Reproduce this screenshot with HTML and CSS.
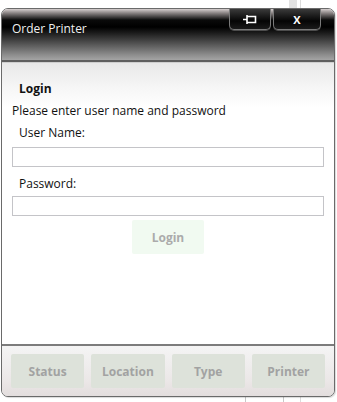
FILE: index.html
```html
<!DOCTYPE html>
<html lang="en">
<head>
    <meta charset="UTF-8">
    <title>Order Printer</title>
    <link rel="stylesheet" href="styles.css">
</head>
<body>
    <div class="behind-strip"></div>
    <div class="behind-line"></div>
    <div class="behind-box"></div>

    <div class="window">
        <div class="titlebar">
            <span class="title">Order Printer</span>
            <div class="caption-buttons">
                <div class="cap-btn pin">
                    <svg width="14" height="10" viewBox="0 0 14 10">
                        <path d="M0 5.5 H4 M4 1 V10 M4 2.5 H12.5 V8.5 H4" fill="none" stroke="#fff" stroke-width="1.6"/>
                    </svg>
                </div>
                <div class="cap-btn close">X</div>
            </div>
        </div>

        <div class="content">
            <h2>Login</h2>
            <p class="hint">Please enter user name and password</p>
            <label for="user">User Name:</label>
            <input type="text" id="user">
            <label for="pass">Password:</label>
            <input type="password" id="pass">
            <div class="login-row">
                <button class="login-btn">Login</button>
            </div>
        </div>

        <div class="footer">
            <button class="tab">Status</button>
            <button class="tab">Location</button>
            <button class="tab">Type</button>
            <button class="tab">Printer</button>
        </div>
    </div>
</body>
</html>
```

FILE: styles.css
```css
body {
    margin: 0;
    padding: 8px 2px 0 1px;
    font-family: "Open Sans", "Liberation Sans", sans-serif;
    font-size: 12px;
    background: #fff;
    position: relative;
    height: 394px;
    overflow: hidden;
}

.behind-strip {
    position: absolute;
    left: 289px;
    top: 0;
    width: 8px;
    height: 10px;
    background: #e2e2e2;
}

.behind-line {
    position: absolute;
    left: 300px;
    top: 0;
    width: 1px;
    height: 402px;
    background: #dcdcdc;
}

.behind-box {
    position: absolute;
    left: 245px;
    top: 385px;
    width: 37px;
    height: 30px;
    border: 1px solid #c8c8c8;
    border-radius: 3px;
    background: #fff;
}

.window {
    position: relative;
    height: 387px;
    border: 1px solid #6a6a6a;
    border-radius: 7px;
    background: #fff;
    display: flex;
    flex-direction: column;
    overflow: hidden;
    box-shadow: 1px 1px 1px rgba(0, 0, 0, 0.15);
}

.titlebar {
    height: 51px;
    display: flex;
    justify-content: space-between;
    background: linear-gradient(to bottom, #d6cfcf 0px, #8a8484 4px, #0a0a0a 11px, #000 18px, #1c1c1c 24px, #5a5a5a 36px, #8e8e8e 46px, #a4a4a4 51px);
    border-bottom: 2px solid #5e5e5e;
}

.title {
    color: #f0f0f0;
    padding: 11px 0 0 10px;
    font-size: 12px;
}

.caption-buttons {
    display: flex;
    gap: 2px;
    margin-right: 13px;
}

.cap-btn {
    height: 20px;
    border: 1px solid #7a7a7a;
    border-top: none;
    border-radius: 0 0 5px 5px;
    background: linear-gradient(to bottom, #3a3a3a, #050505 60%, #1a1a1a);
    display: flex;
    align-items: center;
    justify-content: center;
    color: #fff;
    font-weight: bold;
    font-size: 11px;
    box-shadow: 0 1px 0 rgba(255, 255, 255, 0.25);
}

.pin {
    width: 40px;
}

.close {
    width: 46px;
}

.content {
    flex: 1;
    display: flex;
    flex-direction: column;
    padding: 0 10px;
    background: linear-gradient(to bottom, #e8e8e8 0px, #f6f6f6 25px, #fff 45px);
    border-top: 1px solid #cfcfcf;
}

.content h2 {
    margin: 17px 0 0 7px;
    font-size: 12px;
    font-weight: bold;
    color: #111;
}

.hint {
    margin: 5px 0 0 0;
    color: #111;
}

label {
    margin: 5px 0 6px 7px;
    color: #111;
}

input {
    height: 18px;
    margin: 0;
    padding: 0;
    border: 1px solid #c4c4c8;
    background: #fff;
    outline: none;
}

#pass {
    margin-top: -1px;
}

label[for="pass"] {
    margin-top: 8px;
    margin-bottom: 5px;
}

.login-row {
    display: flex;
    justify-content: center;
    margin-top: 4px;
}

.login-btn {
    width: 72px;
    height: 34px;
    border: none;
    border-radius: 2px;
    background: #f1faf1;
    color: #ababab;
    font-family: inherit;
    font-size: 12px;
    font-weight: bold;
}

.footer {
    height: 52px;
    border-top: 2px solid #7c7c7c;
    background: linear-gradient(to bottom, #f4f4f4 0px, #ebe7e7 35px, #e2dcdc 52px);
    display: flex;
    gap: 7px;
    padding: 8px 9px 0 9px;
    box-sizing: border-box;
}

.tab {
    flex: 1;
    height: 34px;
    border: none;
    border-radius: 2px;
    background: #dde2da;
    color: #a2a2a2;
    font-family: inherit;
    font-size: 12px;
    font-weight: bold;
}
```
